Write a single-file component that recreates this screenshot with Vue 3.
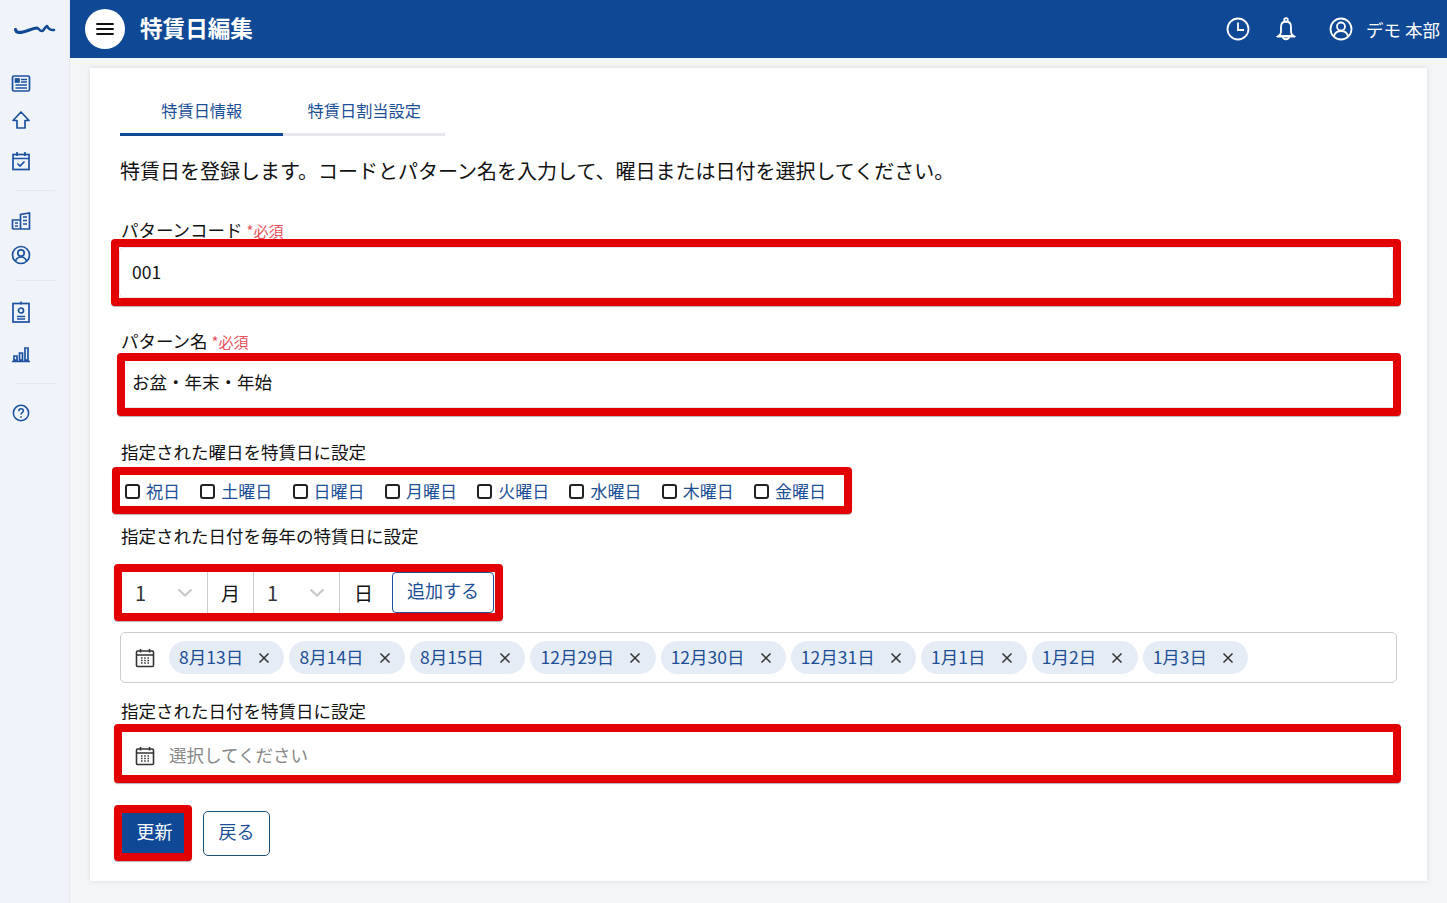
<script setup>
const weekdays = ['祝日', '土曜日', '日曜日', '月曜日', '火曜日', '水曜日', '木曜日', '金曜日']
const dates = ['8月13日', '8月14日', '8月15日', '12月29日', '12月30日', '12月31日', '1月1日', '1月2日', '1月3日']
</script>

<template>
  <div class="layout">
    <!-- サイドバー -->
    <aside class="sidebar">
      <div class="logo">
        <svg width="42" height="14" viewBox="0 0 42 14"><path d="M1.500 7.500C2 10.500 5 11 9 10 14 9 19 6 23 6" fill="none" stroke="#0f4996" stroke-width="3.200" stroke-linecap="round"/><path d="M23 6c2 0 2 3 5 3 2 0 3-4.500 5-5 1 2 3 4.500 7 4" fill="none" stroke="#0f4996" stroke-width="2.600" stroke-linecap="round" stroke-linejoin="round"/></svg>
      </div>
      <div class="nav-group first">
        <svg class="nav-icon" style="margin-bottom:17px" viewBox="0 0 20 20"><rect x="1.500" y="3" width="17" height="15" rx="1.500"/><rect x="4.500" y="6" width="3.500" height="3" class="fill"/><path d="M10 6.500h6M10 9h6M4.500 12h11.500M4.500 15h11.500"/></svg>
        <svg class="nav-icon" style="margin-bottom:21px" viewBox="0 0 20 20"><path d="M10 2 2 10.500h4v7.500h8v-7.500h4z" stroke-linejoin="round"/></svg>
        <svg class="nav-icon" viewBox="0 0 20 20"><rect x="2" y="3.500" width="16" height="15"/><path d="M2 7.500h16M6 1v4M14 1v4M6.500 12.500l2.500 2.500 4.500-4.500"/></svg>
      </div>
      <div class="nav-group second">
        <svg class="nav-icon" style="margin-bottom:14px" viewBox="0 0 20 20"><path d="M1.500 18V9h8M9.500 18V3.500L18.500 2v16zM1.500 18h17M4 12h3M4 15h3M12 6h4M12 9.500h4M12 13h4"/></svg>
        <svg class="nav-icon" viewBox="0 0 20 20"><circle cx="10" cy="10" r="8.500"/><circle cx="10" cy="8" r="3.200"/><path d="M4.500 16c1-3 3-4 5.500-4s4.500 1 5.500 4"/></svg>
      </div>
      <div class="nav-group third">
        <svg class="nav-icon tall" viewBox="0 0 20 22"><rect x="2" y="2.500" width="16" height="18.500"/><path d="M10 .5v3M6 18h8M6 15.500h8"/><circle cx="10" cy="9.500" r="2.500"/></svg>
        <svg class="nav-icon" style="margin-top:21px" viewBox="0 0 20 20"><path d="M1 17.500h18M3 16v-4h3v4zM8.500 16V9h3v7zM14 16V4h3v12z"/></svg>
      </div>
      <div class="nav-group fourth">
        <svg class="nav-icon help" viewBox="0 0 20 20"><circle cx="10" cy="10" r="8.500"/><path d="M7.500 8c0-1.700 1.100-2.700 2.600-2.700s2.500 1 2.500 2.300c0 2-2.600 2-2.600 4.200"/><path d="M10 13.500v1.700"/></svg>
      </div>
    </aside>

    <div class="main">
      <!-- ヘッダー -->
      <header class="header">
        <button class="menu-btn">
          <svg width="18" height="14" viewBox="0 0 18 14"><path d="M1 2h16M1 7h16M1 12h16" stroke="#111" stroke-width="1.800" stroke-linecap="round"/></svg>
        </button>
        <h1 class="page-title">特賃日編集</h1>
        <div class="header-right">
          <svg class="head-icon clock" viewBox="0 0 24 24"><circle cx="12" cy="12" r="10.500"/><path d="M12 5.500V13h6"/></svg>
          <svg class="head-icon bell" viewBox="0 0 24 24"><circle cx="12" cy="3" r="1.800"/><path d="M12 4.500c-3.500 0-5 2.500-5 5.500v5c0 2-1 3-2.500 4h15c-1.500-1-2.500-2-2.500-4v-5c0-3-1.500-5.500-5-5.500zM3 19.500h18M9 20c0 3 6 3 6 0"/></svg>
          <svg class="head-icon user" viewBox="0 0 24 24"><circle cx="12" cy="12" r="10.500"/><circle cx="12" cy="9.500" r="4"/><path d="M5 19c1-3.500 3.500-5 7-5s6 1.500 7 5"/></svg>
          <span class="user-name">デモ 本部</span>
        </div>
      </header>

      <div class="content">
        <section class="card">
          <div class="tabs">
            <div class="tab active">特賃日情報</div>
            <div class="tab">特賃日割当設定</div>
          </div>

          <p class="lead">特賃日を登録します。コードとパターン名を入力して、曜日または日付を選択してください。</p>

          <label class="label code-label">パターンコード <span class="req">*必須</span></label>
          <div class="mark mark-code">
            <div class="input code-input">001</div>
          </div>

          <label class="label name-label">パターン名 <span class="req">*必須</span></label>
          <div class="mark mark-name">
            <div class="input name-input">お盆・年末・年始</div>
          </div>

          <label class="label week-label">指定された曜日を特賃日に設定</label>
          <div class="mark mark-week">
            <div class="week-row">
              <div v-for="day in weekdays" :key="day" class="check-item">
                <span class="checkbox"></span>
                <span class="check-text">{{ day }}</span>
              </div>
            </div>
          </div>

          <label class="label yearly-label">指定された日付を毎年の特賃日に設定</label>
          <div class="mark mark-date">
            <div class="date-row">
              <div class="select">
                <span>1</span>
                <svg width="16" height="9" viewBox="0 0 16 9"><path d="M1.500 1.500 8 7.500l6.500-6" fill="none" stroke="#c8c8c8" stroke-width="2.200"/></svg>
              </div>
              <div class="unit month">月</div>
              <div class="select">
                <span>1</span>
                <svg width="16" height="9" viewBox="0 0 16 9"><path d="M1.500 1.500 8 7.500l6.500-6" fill="none" stroke="#c8c8c8" stroke-width="2.200"/></svg>
              </div>
              <div class="unit day">日</div>
              <button class="add-btn">追加する</button>
            </div>
          </div>

          <div class="tag-box">
            <svg class="cal-icon" viewBox="0 0 20 20"><rect x="1.500" y="3" width="17" height="15.500" rx="1"/><path d="M1.500 7h17M5.500 1v3.500M14.500 1v3.500"/><path class="dots" d="M6 10h1.500M9.200 10h1.500M12.500 10h1.500M6 12.500h1.500M9.200 12.500h1.500M12.500 12.500h1.500M6 15h1.500M9.200 15h1.500M12.500 15h1.500"/></svg>
            <span v-for="d in dates" :key="d" class="tag">
              <span class="tag-text">{{ d }}</span>
              <svg width="12" height="12" viewBox="0 0 12 12"><path d="M1.500 1.500l9 9M10.500 1.500l-9 9" stroke="#333" stroke-width="1.500"/></svg>
            </span>
          </div>

          <label class="label once-label">指定された日付を特賃日に設定</label>
          <div class="mark mark-once">
            <div class="input once-input">
              <svg class="cal-icon once-cal" viewBox="0 0 20 20"><rect x="1.500" y="3" width="17" height="15.500" rx="1"/><path d="M1.500 7h17M5.500 1v3.500M14.500 1v3.500"/><path class="dots" d="M6 10h1.500M9.200 10h1.500M12.500 10h1.500M6 12.500h1.500M9.200 12.500h1.500M12.500 12.500h1.500M6 15h1.500M9.200 15h1.500M12.500 15h1.500"/></svg>
              <span class="placeholder">選択してください</span>
            </div>
          </div>

          <div class="actions">
            <div class="mark mark-save">
              <button class="save-btn">更新</button>
            </div>
            <button class="back-btn">戻る</button>
          </div>
        </section>
      </div>
    </div>
  </div>
</template>

<style>
html, body {
  margin: 0;
  background: #f4f5f7;
}
</style>

<style scoped>
.layout {
  display: flex;
  width: 1447px;
  height: 903px;
  overflow: hidden;
  font-family: "Noto Sans CJK JP", "Noto Sans", sans-serif;
  color: #111;
}

/* サイドバー */
.sidebar {
  width: 69px;
  flex: none;
  background: #f0f4fa;
  border-right: 1px solid #e6e9ef;
  display: flex;
  flex-direction: column;
  align-items: center;
}

.logo {
  height: 58px;
  display: flex;
  align-items: center;
  justify-content: center;
}

.nav-group {
  width: 40px;
  display: flex;
  flex-direction: column;
  align-items: flex-start;
  padding-left: 0;
}

.nav-group.first {
  padding-top: 15px;
  height: 132px;
  box-sizing: border-box;
}

.nav-group.second {
  border-top: 1px solid #e2e7f0;
  padding-top: 20px;
  height: 90px;
  box-sizing: border-box;
}

.nav-group.third {
  border-top: 1px solid #e2e7f0;
  padding-top: 20px;
  height: 103px;
  box-sizing: border-box;
}

.nav-group.fourth {
  border-top: 1px solid #e2e7f0;
  padding-top: 20px;
}

.nav-icon {
  width: 20px;
  height: 20px;
  margin-left: -3.500px;
  fill: none;
  stroke: #1d52a0;
  stroke-width: 1.700;
  flex: none;
}

.nav-icon .fill {
  fill: #1d52a0;
}

.nav-icon.tall {
  height: 22px;
}

.nav-icon.help {
  width: 18px;
  height: 18px;
  margin-left: -2.500px;
}

.main {
  flex: 1;
  min-width: 0;
  display: flex;
  flex-direction: column;
}

/* ヘッダー */
.header {
  height: 58px;
  flex: none;
  background: #0f4996;
  display: flex;
  align-items: center;
  padding-left: 15px;
  color: #fff;
}

.menu-btn {
  width: 40px;
  height: 40px;
  border: none;
  border-radius: 50%;
  background: #fff;
  display: flex;
  align-items: center;
  justify-content: center;
  padding: 0;
}

.page-title {
  margin: 0 0 2px 15px;
  font-size: 22.600px;
  font-weight: 700;
  line-height: 1;
}

.header-right {
  margin-left: auto;
  display: flex;
  align-items: center;
  padding-right: 7px;
}

.head-icon {
  width: 24px;
  height: 24px;
  fill: none;
  stroke: #fff;
  stroke-width: 1.800;
  flex: none;
}

.head-icon.bell {
  margin-left: 24px;
}

.head-icon.user {
  margin-left: 31px;
}

.user-name {
  margin-left: 13px;
  font-size: 17.500px;
  white-space: nowrap;
}

/* カード */
.content {
  flex: 1;
  padding: 10px 20px 22px;
  min-height: 0;
}

.card {
  background: #fff;
  height: 813px;
  box-sizing: border-box;
  padding: 20px 30px 0;
  box-shadow: 0 0 5px rgba(0, 0, 0, 0.1);
}

.tabs {
  display: flex;
  width: 325px;
}

.tab {
  width: 162.500px;
  height: 48px;
  box-sizing: border-box;
  padding: 10px 0 0 1px;
  text-align: center;
  font-size: 16.200px;
  line-height: 24px;
  color: #1d4f96;
  border-bottom: 3px solid #e6e8ee;
}

.tab.active {
  border-bottom-color: #0f4996;
}

.lead {
  margin: 20px 0 0;
  font-size: 20px;
  line-height: 30px;
  white-space: nowrap;
}

.label {
  display: block;
  margin-left: 1px;
  font-size: 17.500px;
  line-height: 24px;
  white-space: nowrap;
}

.req {
  font-size: 15px;
  color: #e8505b;
}

.code-label {
  margin-top: 32px;
  height: 21px;
}

.name-label {
  margin-top: 23px;
  height: 24px;
}

.week-label {
  margin-top: 24px;
  height: 27px;
}

.yearly-label {
  margin-top: 10px;
  height: 40px;
}

.once-label {
  margin-top: 16px;
  height: 25px;
}

/* 赤枠の注釈 */
.mark {
  border: 8px solid #e30000;
  border-radius: 4px;
  box-sizing: border-box;
  background: #fff;
  box-shadow: 0 1px 1px rgba(0, 0, 0, 0.3);
}

.mark-code {
  margin: 0 -4px 0 -9px;
  height: 67px;
}

.mark-name {
  margin: 0 -4px 0 -3px;
  height: 63px;
}

.mark-week {
  margin-left: -8px;
  width: 740px;
  height: 47px;
}

.mark-date {
  margin-left: -6px;
  width: 389px;
  height: 57px;
}

.mark-once {
  margin: 0 -4px 0 -6px;
  height: 59px;
}

.mark-save {
  width: 78px;
  height: 56px;
  margin-left: -6px;
}

.input {
  height: 100%;
  box-sizing: border-box;
  display: flex;
  align-items: center;
  font-size: 17.500px;
}

.code-input {
  padding: 0 0 2px 12px;
  border: 1px solid #e4e4e4;
  border-radius: 5px;
}

.name-input {
  padding: 0 0 6px 7px;
  border-bottom: 1px solid #e4e4e4;
}

.once-input {
  padding: 1px 0 0 13px;
}

.once-cal {
  margin-top: 3px;
}

.week-row {
  height: 100%;
  display: flex;
  align-items: center;
  padding-left: 5px;
}

.check-item {
  display: flex;
  flex: none;
  align-items: center;
  margin-right: 20.300px;
}

.checkbox {
  width: 15px;
  height: 15px;
  flex: none;
  box-sizing: border-box;
  border: 2px solid #222;
  border-radius: 3px;
  margin: 1px 6px 0 0;
}

.check-text {
  font-size: 17px;
  line-height: 24px;
  color: #1d4f96;
  white-space: nowrap;
}

.date-row {
  height: 100%;
  display: flex;
}

.select {
  width: 86px;
  flex: none;
  box-sizing: border-box;
  display: flex;
  align-items: center;
  justify-content: space-between;
  padding: 0 14px 0 13px;
  border-right: 1px solid #ccc;
  font-size: 20px;
  color: #333;
}

.unit {
  flex: none;
  box-sizing: border-box;
  display: flex;
  align-items: center;
  justify-content: center;
  font-size: 19px;
}

.unit.month {
  width: 46px;
  border-right: 1px solid #ccc;
}

.unit.day {
  width: 52px;
  padding-right: 5px;
}

.add-btn {
  width: 102px;
  flex: none;
  background: #fff;
  border: 1px solid #1d4f96;
  border-radius: 4px;
  color: #1d4f96;
  font-family: inherit;
  font-size: 18px;
  padding: 0 0 5px;
}

.tag-box {
  margin-top: 11px;
  height: 51px;
  box-sizing: border-box;
  border: 1px solid #ccc;
  border-radius: 5px;
  display: flex;
  align-items: center;
  padding-left: 14px;
}

.cal-icon {
  width: 20px;
  height: 20px;
  flex: none;
  fill: none;
  stroke: #333;
  stroke-width: 1.600;
  margin-right: 14px;
}

.cal-icon .dots {
  stroke-width: 1.400;
}

.tag {
  display: flex;
  align-items: center;
  height: 33px;
  box-sizing: border-box;
  margin-right: 5px;
  padding: 0 14.350px 0 10px;
  background: #e6ecf5;
  border-radius: 17px;
  font-size: 17.500px;
  color: #1d4f96;
  white-space: nowrap;
}

.tag-text {
  margin-bottom: 2px;
}

.tag svg {
  margin-left: 15px;
}

.placeholder {
  color: #888;
}

.actions {
  margin-top: 22px;
  display: flex;
  align-items: center;
}

.save-btn {
  width: 100%;
  height: 100%;
  border: none;
  background: #0f4996;
  color: #fff;
  font-family: inherit;
  font-size: 18px;
  padding: 0 0 5px 3px;
}

.back-btn {
  width: 67px;
  height: 45px;
  margin-left: 11px;
  background: #fff;
  border: 1px solid #1d4f76;
  border-radius: 5px;
  color: #1d4f96;
  font-family: inherit;
  font-size: 18px;
  padding: 0 0 4px;
}
</style>
